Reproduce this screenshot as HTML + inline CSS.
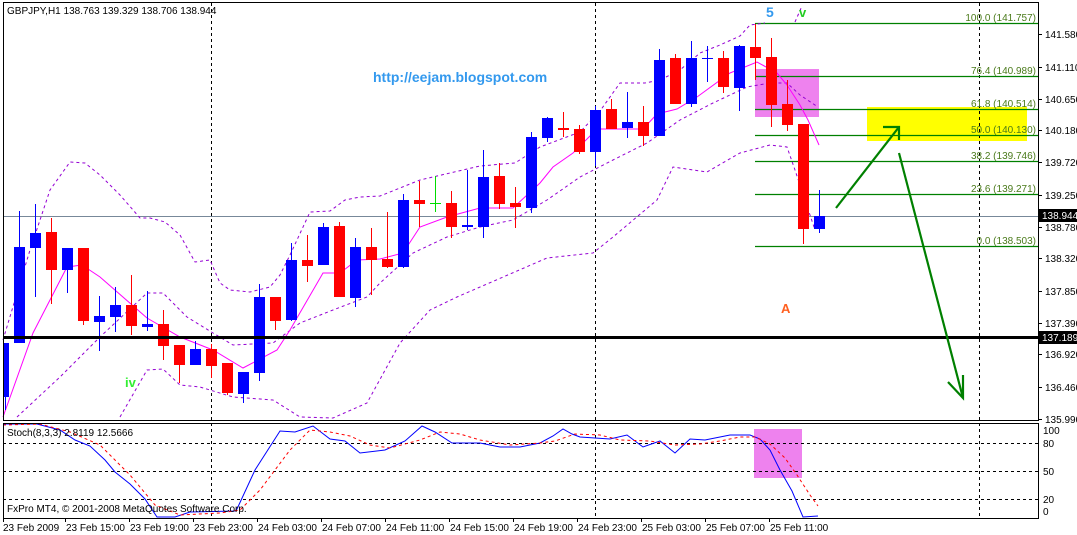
<!DOCTYPE html>
<html><head><meta charset="utf-8"><style>
body{margin:0;background:#fff;}
svg{display:block;font-family:"Liberation Sans",Tahoma,sans-serif;}
</style></head><body>
<svg width="1077" height="535" viewBox="0 0 1077 535" xmlns="http://www.w3.org/2000/svg">
<rect width="1077" height="535" fill="#fff"/>
<!-- rects -->
<rect x="867" y="107" width="160" height="34" fill="#ffff00"/>
<rect x="755" y="69" width="64" height="48" fill="#ee82ee"/>
<rect x="754" y="429" width="48" height="49" fill="#ee82ee"/>
<!-- vertical dashed -->
<g stroke="#000" stroke-dasharray="3,3" stroke-width="1">
<line x1="211.5" y1="3" x2="211.5" y2="518"/>
<line x1="595.5" y1="3" x2="595.5" y2="518"/>
<line x1="979.5" y1="3" x2="979.5" y2="518"/>
<line x1="3" y1="443.5" x2="1038" y2="443.5"/>
<line x1="3" y1="471.5" x2="1038" y2="471.5"/>
<line x1="3" y1="499.5" x2="1038" y2="499.5"/>
</g>
<!-- fib lines -->
<g stroke="#008000" stroke-width="1.3">
<line x1="755" y1="23.5" x2="1038" y2="23.5"/>
<line x1="755" y1="76.5" x2="1038" y2="76.5"/>
<line x1="755" y1="109.5" x2="1038" y2="109.5"/>
<line x1="755" y1="135.5" x2="1038" y2="135.5"/>
<line x1="755" y1="161.5" x2="1038" y2="161.5"/>
<line x1="755" y1="194.5" x2="1038" y2="194.5"/>
<line x1="755" y1="246.5" x2="1038" y2="246.5"/>
</g>
<g fill="#4a7a1a" font-size="10" text-anchor="end">
<text x="1036" y="21">100.0 (141.757)</text>
<text x="1036" y="74">76.4 (140.989)</text>
<text x="1036" y="107">61.8 (140.514)</text>
<text x="1036" y="133">50.0 (140.130)</text>
<text x="1036" y="159">38.2 (139.746)</text>
<text x="1036" y="192">23.6 (139.271)</text>
<text x="1036" y="244">0.0 (138.503)</text>
</g>
<line x1="3" y1="216.5" x2="1038" y2="216.5" stroke="#778899" stroke-width="1"/>
<!-- bands -->
<g fill="none" stroke="#9400d3" stroke-width="1" stroke-dasharray="3,3">
<polyline points="3,340 30,250 50,190 70,162 85,163 100,175 120,195 140,218 150,218 165,222 180,235 195,262 210,260 220,283 230,290 250,292 270,287 280,275 290,255 310,212 330,211 345,200 360,197 380,196 420,180 480,166 515,163 540,147 580,132 600,111 620,83 645,83 660,80 680,70 700,53 720,45 740,36 750,25 765,23"/>
<polyline points="795,22 802,6"/>
<polyline points="17,417 60,377 100,337 147,293 163,293 187,317 213,333 233,345 273,343 300,323 333,310 367,297 380,283 413,253 447,237 480,227 513,220 547,200 580,177 613,160 647,143 680,120 713,103 747,87 770,83 787,83 800,95 818,107"/>
<polyline points="120,417 147,370 163,369 180,385 200,387 233,397 273,400 300,417 333,418 367,403 400,343 430,310 457,297 547,258 593,253 613,237 657,200 673,167 707,172 740,153 770,145 787,147 795,170 805,200 815,230"/>
</g>
<polyline fill="none" stroke="#ff00ff" stroke-width="1" points="3,417 33,333 67,267 82,265 100,277 147,318 180,337 213,350 243,368 277,350 290,330 323,273 340,273 357,260 380,259 403,253 420,227 447,217 480,208 513,208 540,183 553,167 573,153 597,129 643,129 657,114 677,109 697,97 730,73 757,62 777,73 787,85 800,105 808,120 819,145"/>
<!-- candles -->
<g id="c"></g>
<g stroke-width="1">
<!-- x, bodyTop, bodyBottom, high, low -->
<line x1="5.5" y1="343" x2="5.5" y2="410" stroke="#0000ff"/><rect x="3" y="343" width="6" height="54" fill="#0000ff"/>
<line x1="19.5" y1="211" x2="19.5" y2="343" stroke="#0000ff"/><rect x="14" y="247" width="11" height="96" fill="#0000ff"/>
<line x1="35.5" y1="204" x2="35.5" y2="297" stroke="#0000ff"/><rect x="30" y="233" width="11" height="15" fill="#0000ff"/>
<line x1="51.5" y1="218" x2="51.5" y2="304" stroke="#ff0000"/><rect x="46" y="232" width="11" height="38" fill="#ff0000"/>
<line x1="67.5" y1="248" x2="67.5" y2="293" stroke="#0000ff"/><rect x="62" y="248" width="11" height="22" fill="#0000ff"/>
<line x1="83.5" y1="248" x2="83.5" y2="325" stroke="#ff0000"/><rect x="78" y="248" width="11" height="73" fill="#ff0000"/>
<line x1="99.5" y1="296" x2="99.5" y2="351" stroke="#0000ff"/><rect x="94" y="316" width="11" height="6" fill="#0000ff"/>
<line x1="115.5" y1="287" x2="115.5" y2="332" stroke="#0000ff"/><rect x="110" y="305" width="11" height="12" fill="#0000ff"/>
<line x1="131.5" y1="275" x2="131.5" y2="335" stroke="#ff0000"/><rect x="126" y="305" width="11" height="21" fill="#ff0000"/>
<line x1="147.5" y1="291" x2="147.5" y2="331" stroke="#0000ff"/><rect x="142" y="324" width="11" height="3" fill="#0000ff"/>
<line x1="163.5" y1="310" x2="163.5" y2="360" stroke="#ff0000"/><rect x="158" y="324" width="11" height="22" fill="#ff0000"/>
<line x1="179.5" y1="345" x2="179.5" y2="383" stroke="#ff0000"/><rect x="174" y="345" width="11" height="20" fill="#ff0000"/>
<line x1="195.5" y1="341" x2="195.5" y2="365" stroke="#0000ff"/><rect x="190" y="349" width="11" height="16" fill="#0000ff"/>
<line x1="211.5" y1="344" x2="211.5" y2="378" stroke="#ff0000"/><rect x="206" y="349" width="11" height="17" fill="#ff0000"/>
<line x1="227.5" y1="363" x2="227.5" y2="395" stroke="#ff0000"/><rect x="222" y="363" width="11" height="30" fill="#ff0000"/>
<line x1="243.5" y1="372" x2="243.5" y2="403" stroke="#0000ff"/><rect x="238" y="372" width="11" height="22" fill="#0000ff"/>
<line x1="259.5" y1="284" x2="259.5" y2="381" stroke="#0000ff"/><rect x="254" y="297" width="11" height="76" fill="#0000ff"/>
<line x1="275.5" y1="297" x2="275.5" y2="330" stroke="#ff0000"/><rect x="270" y="297" width="11" height="24" fill="#ff0000"/>
<line x1="291.5" y1="243" x2="291.5" y2="321" stroke="#0000ff"/><rect x="286" y="260" width="11" height="60" fill="#0000ff"/>
<line x1="307.5" y1="235" x2="307.5" y2="282" stroke="#ff0000"/><rect x="302" y="260" width="11" height="6" fill="#ff0000"/>
<line x1="323.5" y1="223" x2="323.5" y2="265" stroke="#0000ff"/><rect x="318" y="227" width="11" height="38" fill="#0000ff"/>
<line x1="339.5" y1="222" x2="339.5" y2="297" stroke="#ff0000"/><rect x="334" y="226" width="11" height="71" fill="#ff0000"/>
<line x1="355.5" y1="238" x2="355.5" y2="307" stroke="#0000ff"/><rect x="350" y="247" width="11" height="51" fill="#0000ff"/>
<line x1="371.5" y1="228" x2="371.5" y2="295" stroke="#ff0000"/><rect x="366" y="247" width="11" height="13" fill="#ff0000"/>
<line x1="387.5" y1="212" x2="387.5" y2="268" stroke="#ff0000"/><rect x="382" y="259" width="11" height="8" fill="#ff0000"/>
<line x1="403.5" y1="194" x2="403.5" y2="268" stroke="#0000ff"/><rect x="398" y="200" width="11" height="67" fill="#0000ff"/>
<line x1="419.5" y1="181" x2="419.5" y2="227" stroke="#ff0000"/><rect x="414" y="200" width="11" height="4" fill="#ff0000"/>
<line x1="435.5" y1="176" x2="435.5" y2="212" stroke="#00dd00"/><rect x="430" y="203" width="11" height="1" fill="#00dd00"/>
<line x1="451.5" y1="191" x2="451.5" y2="238" stroke="#ff0000"/><rect x="446" y="203" width="11" height="24" fill="#ff0000"/>
<line x1="467.5" y1="170" x2="467.5" y2="230" stroke="#0000ff"/><rect x="462" y="225" width="11" height="2" fill="#0000ff"/>
<line x1="483.5" y1="150" x2="483.5" y2="238" stroke="#0000ff"/><rect x="478" y="177" width="11" height="50" fill="#0000ff"/>
<line x1="499.5" y1="163" x2="499.5" y2="209" stroke="#ff0000"/><rect x="494" y="176" width="11" height="28" fill="#ff0000"/>
<line x1="515.5" y1="187" x2="515.5" y2="228" stroke="#ff0000"/><rect x="510" y="203" width="11" height="4" fill="#ff0000"/>
<line x1="531.5" y1="132" x2="531.5" y2="213" stroke="#0000ff"/><rect x="526" y="137" width="11" height="71" fill="#0000ff"/>
<line x1="547.5" y1="117" x2="547.5" y2="142" stroke="#0000ff"/><rect x="542" y="118" width="11" height="20" fill="#0000ff"/>
<line x1="563.5" y1="112" x2="563.5" y2="137" stroke="#ff0000"/><rect x="558" y="128" width="11" height="2" fill="#ff0000"/>
<line x1="579.5" y1="125" x2="579.5" y2="154" stroke="#ff0000"/><rect x="574" y="129" width="11" height="23" fill="#ff0000"/>
<line x1="595.5" y1="106" x2="595.5" y2="166" stroke="#0000ff"/><rect x="590" y="110" width="11" height="42" fill="#0000ff"/>
<line x1="611.5" y1="99" x2="611.5" y2="129" stroke="#ff0000"/><rect x="606" y="109" width="11" height="20" fill="#ff0000"/>
<line x1="627.5" y1="92" x2="627.5" y2="138" stroke="#0000ff"/><rect x="622" y="122" width="11" height="6" fill="#0000ff"/>
<line x1="643.5" y1="106" x2="643.5" y2="146" stroke="#ff0000"/><rect x="638" y="122" width="11" height="14" fill="#ff0000"/>
<line x1="659.5" y1="49" x2="659.5" y2="136" stroke="#0000ff"/><rect x="654" y="60" width="11" height="76" fill="#0000ff"/>
<line x1="675.5" y1="54" x2="675.5" y2="104" stroke="#ff0000"/><rect x="670" y="58" width="11" height="46" fill="#ff0000"/>
<line x1="691.5" y1="41" x2="691.5" y2="107" stroke="#0000ff"/><rect x="686" y="58" width="11" height="46" fill="#0000ff"/>
<line x1="707.5" y1="46" x2="707.5" y2="82" stroke="#0000ff"/><rect x="702" y="58" width="11" height="1" fill="#0000ff"/>
<line x1="723.5" y1="51" x2="723.5" y2="93" stroke="#ff0000"/><rect x="718" y="58" width="11" height="29" fill="#ff0000"/>
<line x1="739.5" y1="45" x2="739.5" y2="111" stroke="#0000ff"/><rect x="734" y="46" width="11" height="42" fill="#0000ff"/>
<line x1="755.5" y1="24" x2="755.5" y2="80" stroke="#ff0000"/><rect x="750" y="47" width="11" height="11" fill="#ff0000"/>
<line x1="771.5" y1="38" x2="771.5" y2="127" stroke="#ff0000"/><rect x="766" y="57" width="11" height="48" fill="#ff0000"/>
<line x1="787.5" y1="80" x2="787.5" y2="131" stroke="#ff0000"/><rect x="782" y="104" width="11" height="21" fill="#ff0000"/>
<line x1="803.5" y1="124" x2="803.5" y2="244" stroke="#ff0000"/><rect x="798" y="124" width="11" height="105" fill="#ff0000"/>
<line x1="819.5" y1="190" x2="819.5" y2="233" stroke="#0000ff"/><rect x="814" y="216" width="11" height="13" fill="#0000ff"/>
</g>
<!-- thick black line -->
<line x1="3" y1="337.5" x2="1038" y2="337.5" stroke="#000" stroke-width="3"/>
<!-- arrows -->
<g stroke="#008000" stroke-width="2.2" fill="none">
<polyline points="836,208 899,127"/>
<polyline points="883,127 899,127 899,140"/>
<polyline points="899,153 963,398"/>
<polyline points="948,382 963,398 963,375"/>
</g>
<!-- texts -->
<text x="373" y="82" font-size="14" font-weight="bold" fill="#3399ee">http://eejam.blogspot.com</text>
<text x="766" y="17" font-size="14" font-weight="bold" fill="#3399ee">5</text>
<text x="799" y="17" font-size="13" font-weight="bold" fill="#22cc22">v</text>
<text x="125" y="387" font-size="13" font-weight="bold" fill="#33ee33">iv</text>
<text x="781" y="313" font-size="13" font-weight="bold" fill="#ff6020">A</text>
<text x="7" y="14" font-size="10" fill="#000">GBPJPY,H1  138.763 139.329 138.706 138.944</text>
<!-- stoch lines -->
<polyline fill="none" stroke="#0000ff" stroke-width="1" points="3,424 37,424 60,430 75,440 90,446 105,460 115,472 130,484 145,499 157,517 175,517 190,512 235,511 237,509 255,470 280,431 295,432 313,426 330,439 345,441 360,453 385,450 405,441 422,426 435,432 452,443 480,443 500,447 520,447 540,443 553,436 563,429 572,434 580,437 610,439 627,435 643,447 660,441 675,453 690,439 705,440 720,437 730,435 750,435 760,439 770,450 780,470 792,491 803,517 818,516"/>
<polyline fill="none" stroke="#ff0000" stroke-width="1" stroke-dasharray="3,3" points="3,425 40,424 70,432 100,445 130,475 155,505 180,515 220,513 240,510 260,490 290,450 310,430 330,432 350,436 370,445 390,448 420,440 440,432 460,434 480,440 510,445 540,443 555,441 575,434 600,435 620,440 650,441 675,445 700,444 720,441 740,437 755,437 770,444 785,458 797,475 810,495 818,506"/>
<text x="7" y="436" font-size="10" fill="#000">Stoch(8,3,3) 2.8119 12.5666</text>
<text x="7" y="512" font-size="10" fill="#000">FxPro MT4, © 2001-2008 MetaQuotes Software Corp.</text>
<!-- frames -->
<g fill="none" stroke="#000" stroke-width="1">
<rect x="3.5" y="2.5" width="1035" height="418"/>
<rect x="3.5" y="423.5" width="1035" height="95"/>
</g>
<!-- right axis -->
<g font-size="10" fill="#000">
<text x="1045" y="38">141.580</text>
<text x="1045" y="71">141.110</text>
<text x="1045" y="103">140.650</text>
<text x="1045" y="134">140.180</text>
<text x="1045" y="166">139.720</text>
<text x="1045" y="199">139.250</text>
<text x="1045" y="231">138.780</text>
<text x="1045" y="262">138.320</text>
<text x="1045" y="295">137.850</text>
<text x="1045" y="327">137.390</text>
<text x="1045" y="358">136.920</text>
<text x="1045" y="391">136.460</text>
<text x="1045" y="423">135.990</text>
<text x="1043" y="434">100</text>
<text x="1043" y="447">80</text>
<text x="1043" y="475">50</text>
<text x="1043" y="503">20</text>
<text x="1043" y="515">0</text>
</g>
<g stroke="#000">
<line x1="1038" y1="34.5" x2="1042" y2="34.5"/><line x1="1038" y1="67.5" x2="1042" y2="67.5"/><line x1="1038" y1="99.5" x2="1042" y2="99.5"/><line x1="1038" y1="130.5" x2="1042" y2="130.5"/><line x1="1038" y1="162.5" x2="1042" y2="162.5"/><line x1="1038" y1="195.5" x2="1042" y2="195.5"/><line x1="1038" y1="227.5" x2="1042" y2="227.5"/><line x1="1038" y1="258.5" x2="1042" y2="258.5"/><line x1="1038" y1="291.5" x2="1042" y2="291.5"/><line x1="1038" y1="323.5" x2="1042" y2="323.5"/><line x1="1038" y1="354.5" x2="1042" y2="354.5"/><line x1="1038" y1="387.5" x2="1042" y2="387.5"/><line x1="1038" y1="419.5" x2="1042" y2="419.5"/>
</g>
<rect x="1039" y="209" width="38" height="13" fill="#000"/>
<text x="1042" y="219" font-size="10" fill="#fff">138.944</text>
<rect x="1039" y="331" width="38" height="13" fill="#000"/>
<text x="1042" y="341" font-size="10" fill="#fff">137.189</text>
<!-- bottom axis -->
<g font-size="10" fill="#000">
<text x="3" y="531">23 Feb 2009</text>
<text x="66" y="531">23 Feb 15:00</text>
<text x="130" y="531">23 Feb 19:00</text>
<text x="194" y="531">23 Feb 23:00</text>
<text x="258" y="531">24 Feb 03:00</text>
<text x="322" y="531">24 Feb 07:00</text>
<text x="386" y="531">24 Feb 11:00</text>
<text x="450" y="531">24 Feb 15:00</text>
<text x="514" y="531">24 Feb 19:00</text>
<text x="578" y="531">24 Feb 23:00</text>
<text x="642" y="531">25 Feb 03:00</text>
<text x="706" y="531">25 Feb 07:00</text>
<text x="770" y="531">25 Feb 11:00</text>
</g>
<g stroke="#000">
<line x1="3.5" y1="518" x2="3.5" y2="522"/><line x1="65.5" y1="518" x2="65.5" y2="522"/><line x1="129.5" y1="518" x2="129.5" y2="522"/><line x1="193.5" y1="518" x2="193.5" y2="522"/><line x1="257.5" y1="518" x2="257.5" y2="522"/><line x1="321.5" y1="518" x2="321.5" y2="522"/><line x1="385.5" y1="518" x2="385.5" y2="522"/><line x1="449.5" y1="518" x2="449.5" y2="522"/><line x1="513.5" y1="518" x2="513.5" y2="522"/><line x1="577.5" y1="518" x2="577.5" y2="522"/><line x1="641.5" y1="518" x2="641.5" y2="522"/><line x1="705.5" y1="518" x2="705.5" y2="522"/><line x1="769.5" y1="518" x2="769.5" y2="522"/>
</g>
</svg>
</body></html>
